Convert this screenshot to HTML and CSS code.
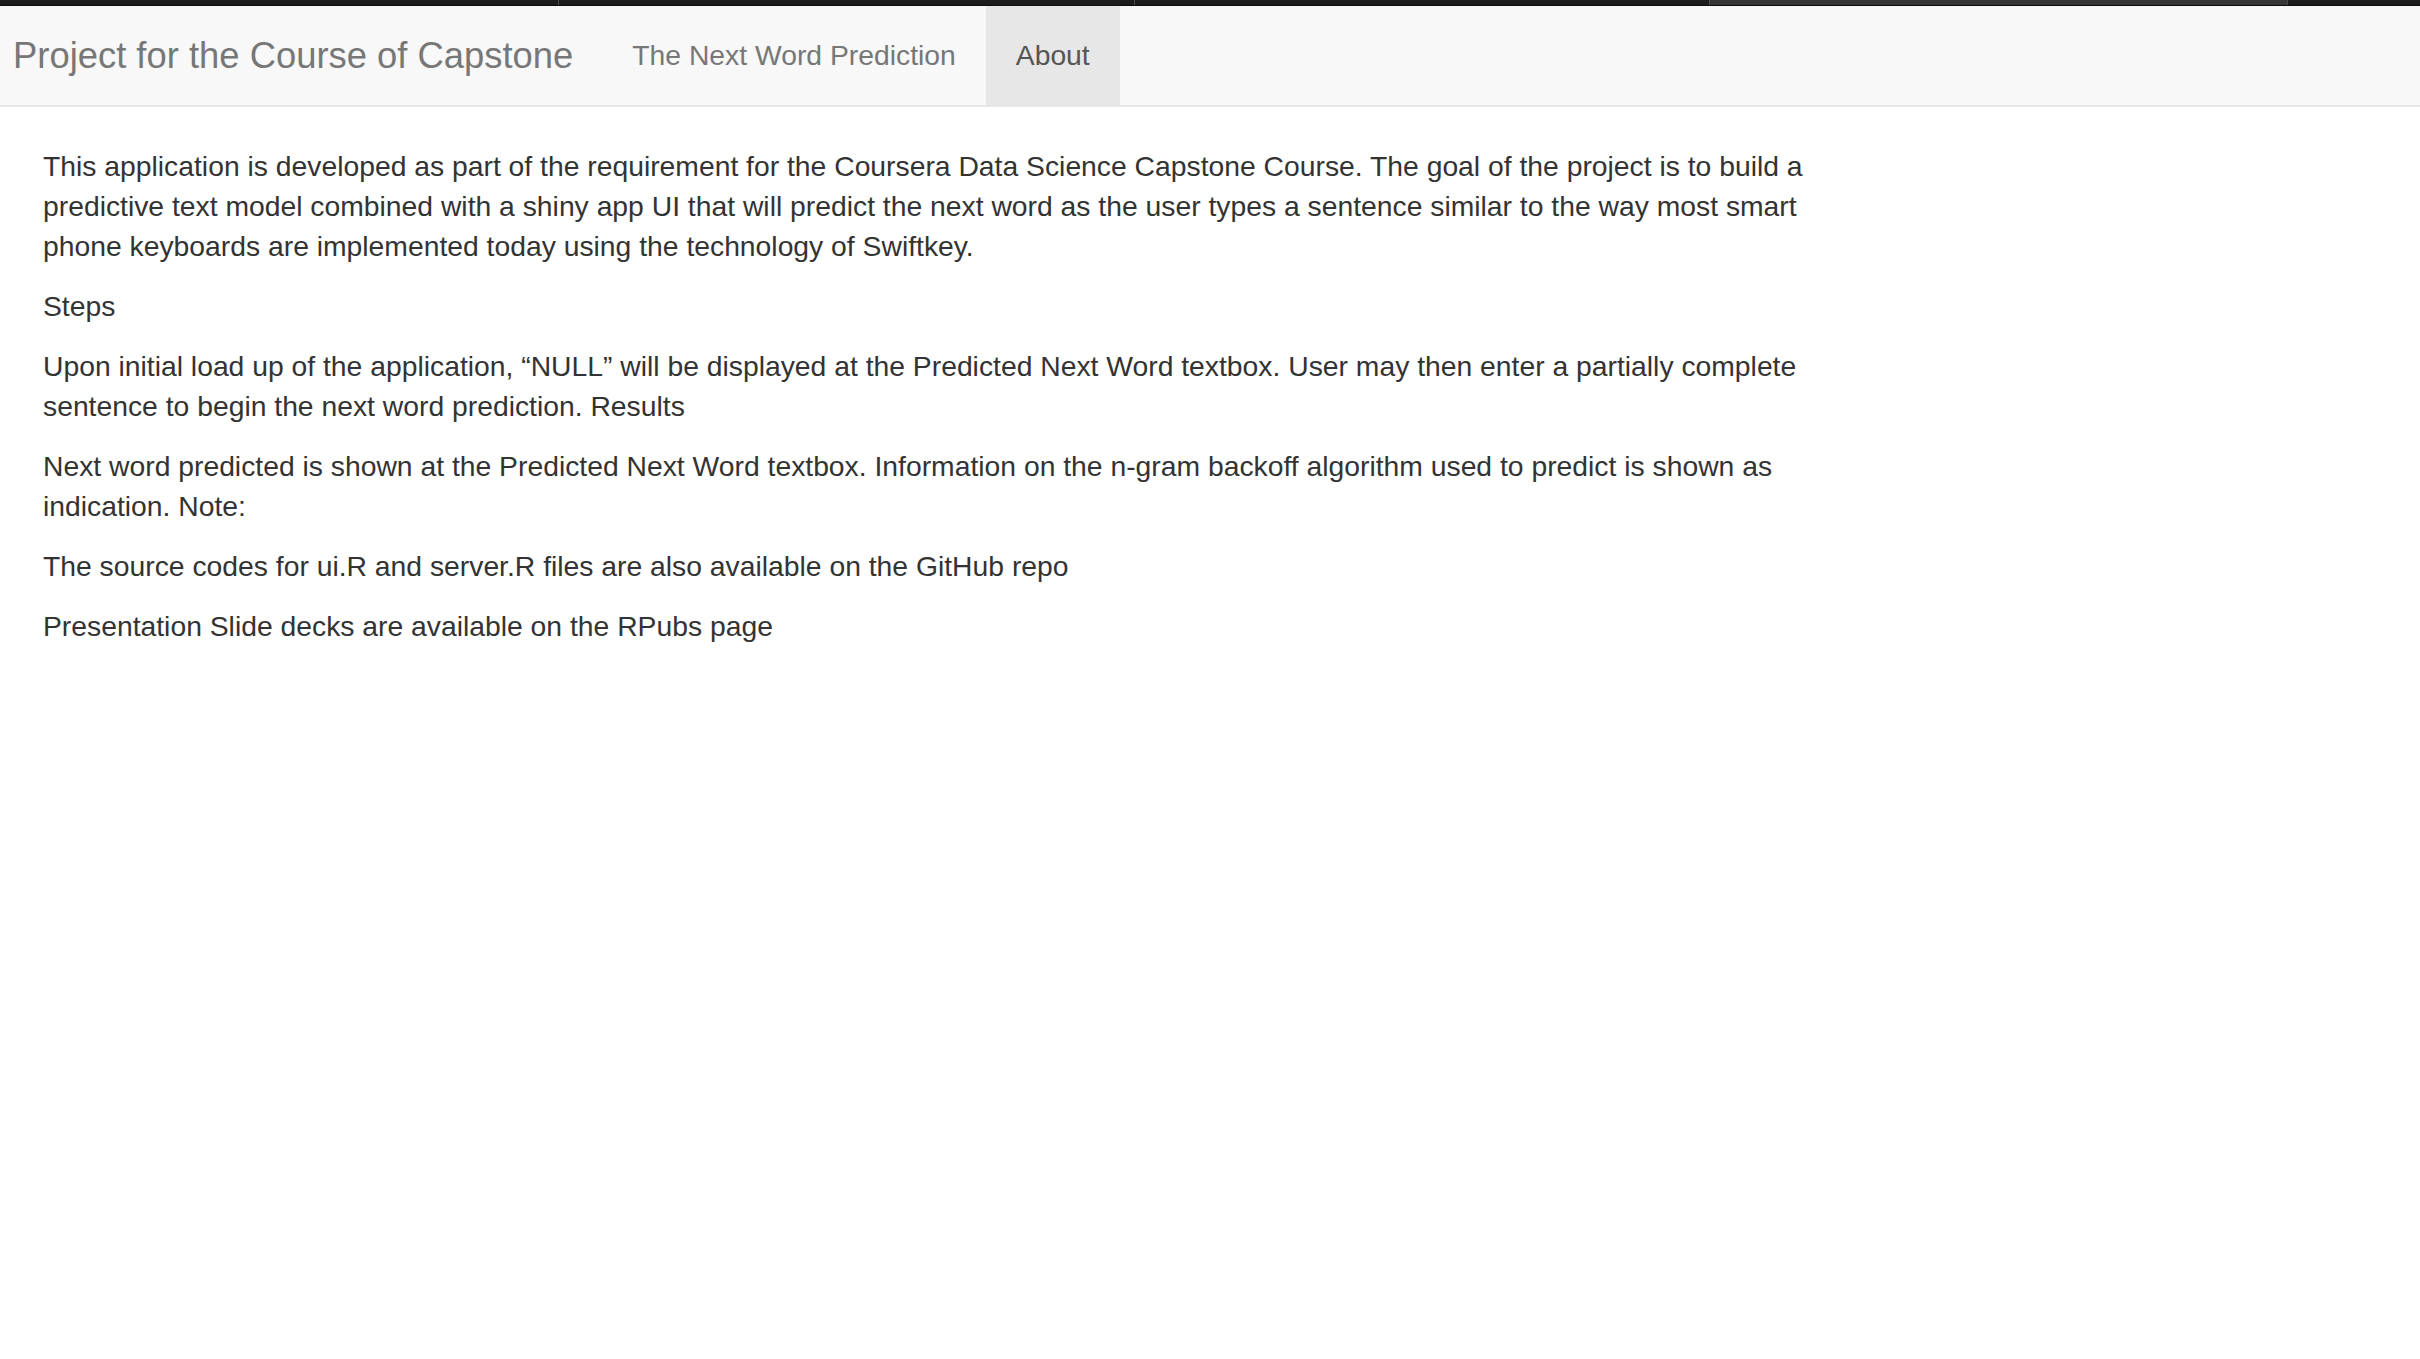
FILE: index.html
```html
<!DOCTYPE html>
<html>
<head>
<meta charset="utf-8">
<title>Project for the Course of Capstone</title>
<link rel="stylesheet" href="styles.css">
</head>
<body>
<div class="topbar">
  <div class="seg seg-a"></div>
  <div class="seg seg-b"></div>
  <div class="seg seg-c"></div>
  <div class="seg seg-d"></div>
  <div class="seg seg-e"></div>
</div>
<nav class="navbar">
  <span class="brand">Project for the Course of Capstone</span>
  <a class="nav-link">The Next Word Prediction</a>
  <a class="nav-link active">About</a>
</nav>
<main class="content">
  <p>This application is developed as part of the requirement for the Coursera Data Science Capstone Course. The goal of the project is to build a predictive text model combined with a shiny app UI that will predict the next word as the user types a sentence similar to the way most smart phone keyboards are implemented today using the technology of Swiftkey.</p>
  <p>Steps</p>
  <p>Upon initial load up of the application, “NULL” will be displayed at the Predicted Next Word textbox. User may then enter a partially complete sentence to begin the next word prediction. Results</p>
  <p>Next word predicted is shown at the Predicted Next Word textbox. Information on the n-gram backoff algorithm used to predict is shown as indication. Note:</p>
  <p>The source codes for ui.R and server.R files are also available on the GitHub repo</p>
  <p>Presentation Slide decks are available on the RPubs page</p>
</main>
</body>
</html>
```
FILE: styles.css
```css
html, body {
  margin: 0;
  padding: 0;
  background: #ffffff;
}
body {
  font-family: "Liberation Sans", Arial, Helvetica, sans-serif;
  color: #333333;
}
.topbar {
  display: flex;
  height: 5px;
  background: #1c1c1c;
  border-bottom: 1px solid #0d0d0d;
}
.seg {
  height: 100%;
}
.seg-a { width: 558px; border-right: 1px solid #4a4a4a; }
.seg-b { width: 575px; border-right: 1px solid #4a4a4a; }
.seg-c { width: 574px; border-right: 1px solid #4a4a4a; }
.seg-d { width: 577px; background: #363636; border-right: 1px solid #4a4a4a; }
.seg-e { flex: 1; }

.navbar {
  display: flex;
  align-items: stretch;
  background: #f8f8f8;
  border-bottom: 2px solid #e7e7e7;
  box-sizing: border-box;
  height: 101px;
}
.brand {
  font-size: 36.4px;
  line-height: 99px;
  color: #777777;
  padding: 0 29px 0 13px;
  white-space: nowrap;
}
.nav-link {
  font-size: 28.3px;
  line-height: 99px;
  color: #777777;
  padding: 0 30px;
  white-space: nowrap;
  text-decoration: none;
}
.nav-link.active {
  color: #555555;
  background: #e7e7e7;
}
.content {
  padding: 39px 0 0 43px;
  width: 1800px;
}
.content p {
  margin: 0 0 20px 0;
  font-size: 28.3px;
  line-height: 40px;
}
```
